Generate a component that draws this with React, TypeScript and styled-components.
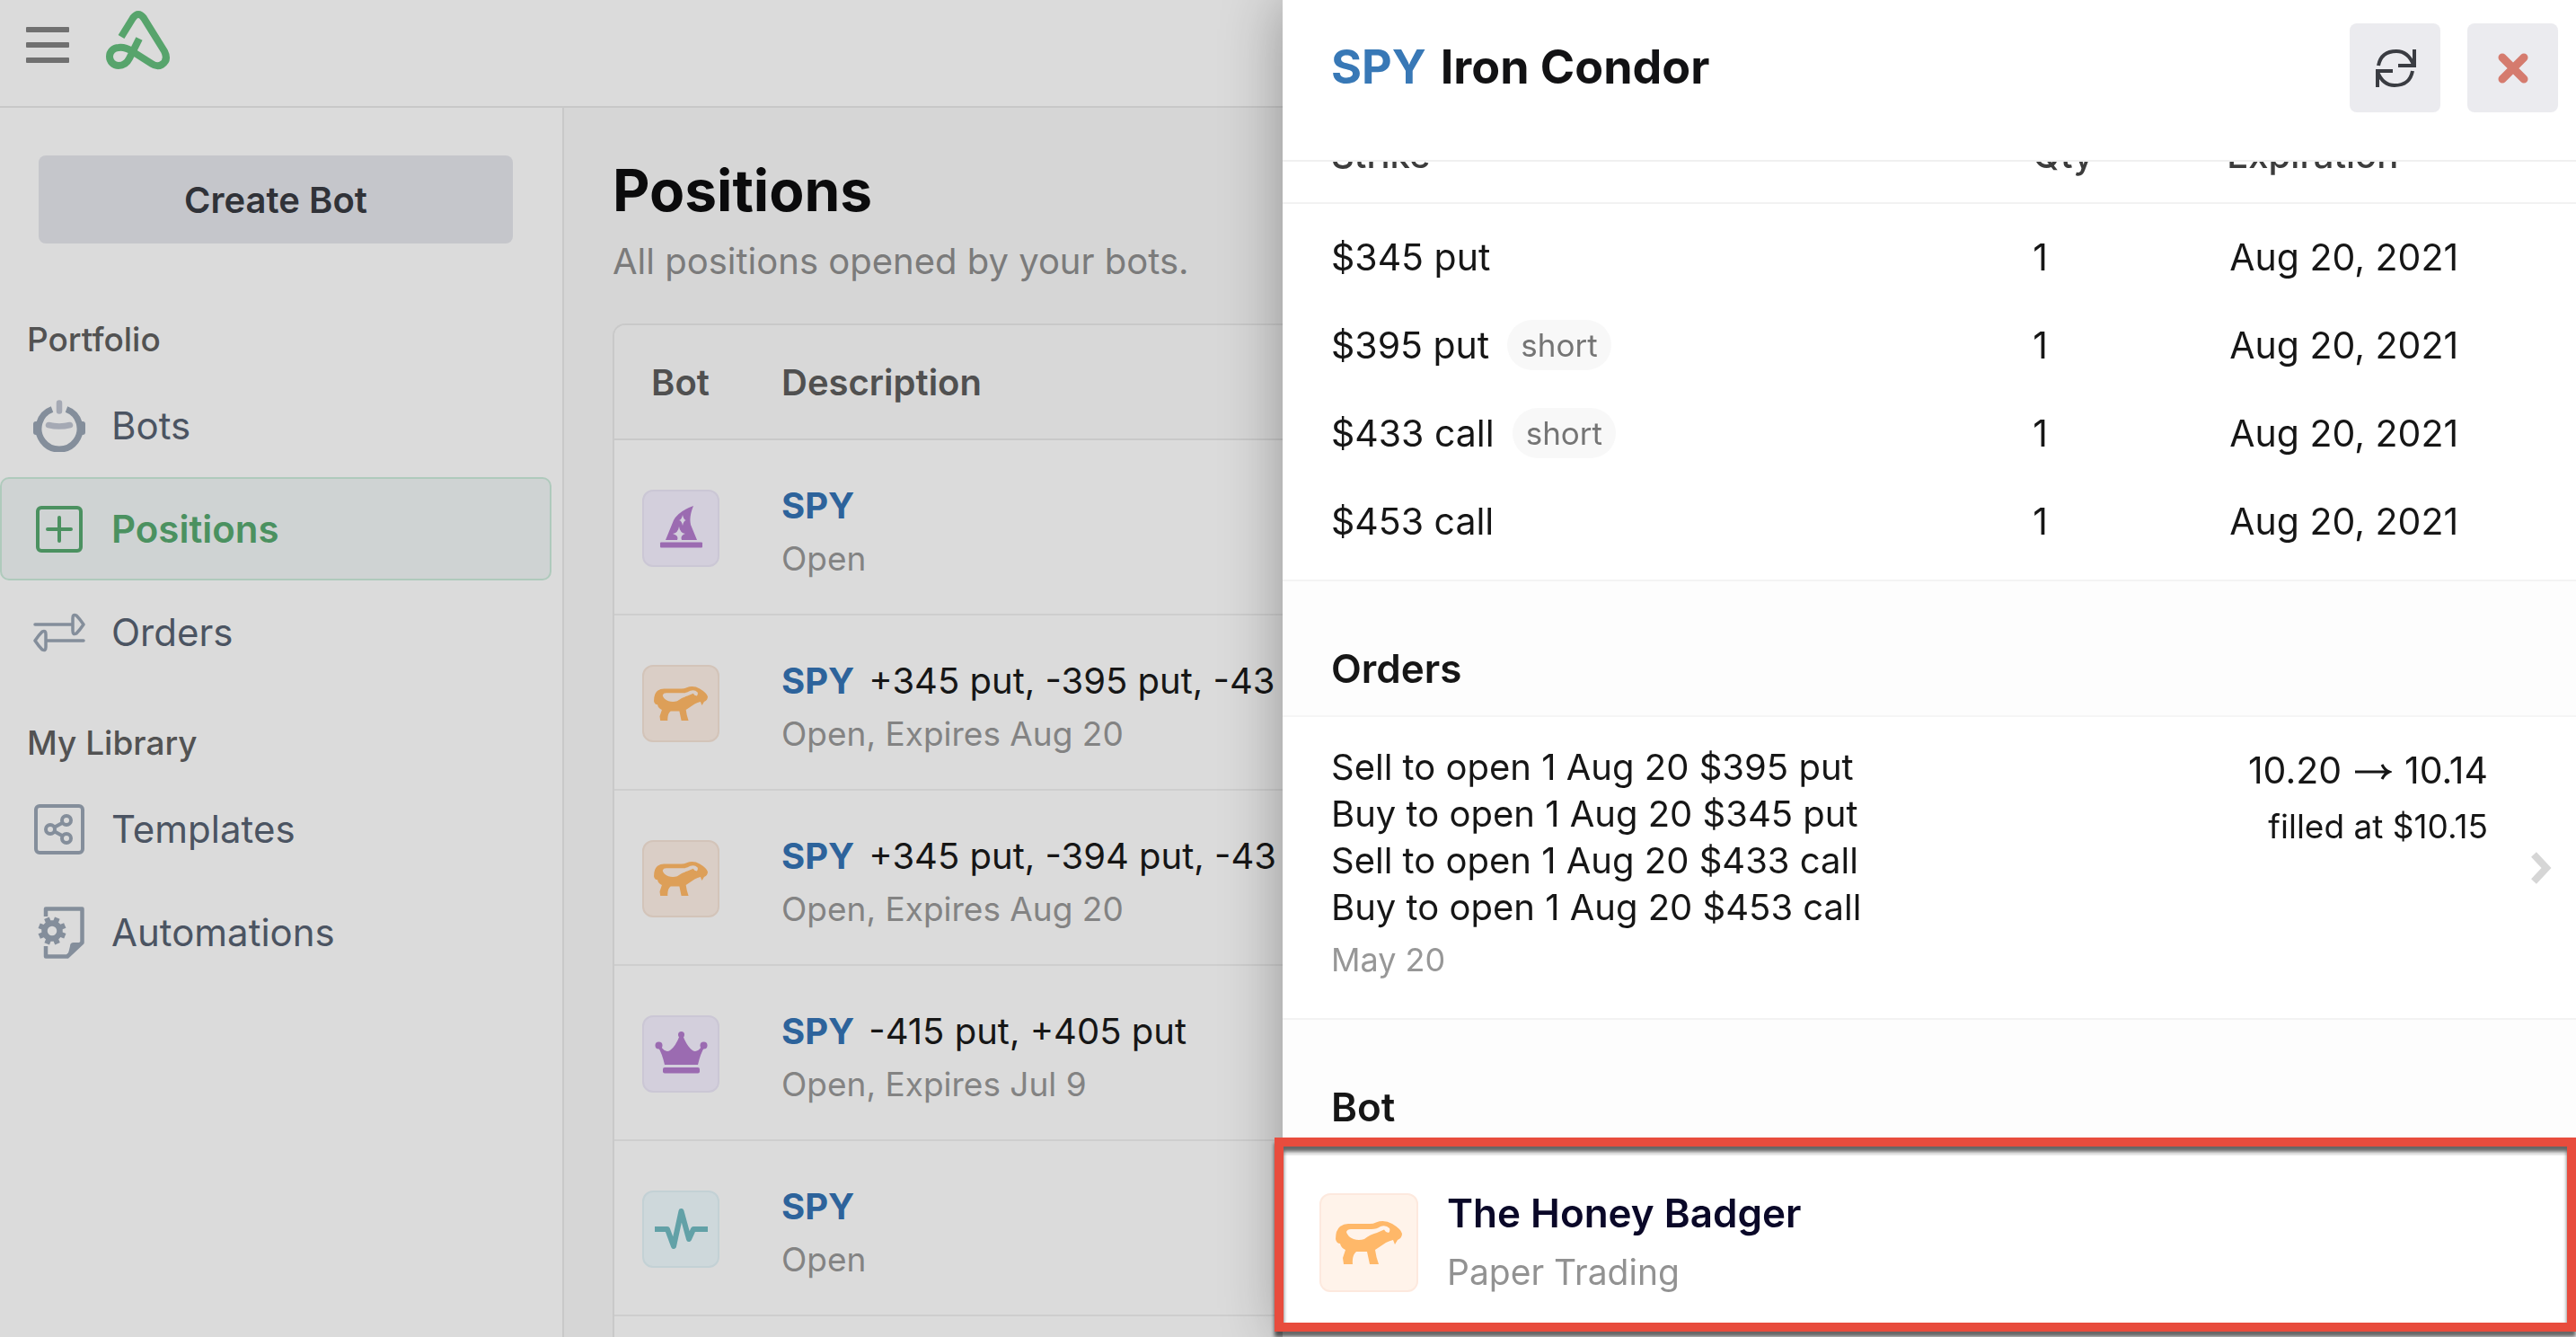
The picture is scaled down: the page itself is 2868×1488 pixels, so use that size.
import React from "react";
import styled, { createGlobalStyle } from "styled-components";

const GlobalStyle = createGlobalStyle`
  *, *::before, *::after { box-sizing: border-box; }
  body {
    margin: 0;
    background: #d6d6d6;
    color: #161616;
    font-family: Inter, "Liberation Sans", sans-serif;
    font-size: 40px;
  }
  h1, h2, h3, p { margin: 0; font-weight: inherit; }
  a { color: inherit; text-decoration: none; }
  button { font: inherit; border: 0; padding: 0; cursor: pointer; }
`;

/* ---------- page shell ---------- */

const Page = styled.div`
  display: flex;
  flex-direction: column;
  height: 100vh;
  overflow: hidden;
`;

const TopBar = styled.header`
  display: flex;
  align-items: flex-start;
  gap: 40px;
  height: 120px;
  flex: none;
  padding: 10px 29px 0;
  background: #dbdbdb;
  border-bottom: 2px solid #c8c8c8;
`;

const MenuButton = styled.button`
  display: flex;
  flex-direction: column;
  gap: 11px;
  width: 48px;
  padding: 20px 0 16px;
  background: none;
`;

const MenuBar = styled.span`
  height: 6px;
  border-radius: 1px;
  background: #707070;
`;

const Columns = styled.div`
  display: flex;
  flex: 1;
  min-height: 0;
`;

const Sidebar = styled.aside`
  width: 628px;
  flex: none;
  background: #dbdbdb;
  border-right: 2px solid #c9c9c9;
`;

const CreateButton = styled.button`
  display: block;
  width: calc(100% - 98px);
  height: 98px;
  margin: 53px 55px 41px 43px;
  border-radius: 8px;
  background: #c5c6cb;
  color: #303238;
  font-weight: 600;
`;

const NavGroup = styled.section`
  padding-top: 38px;
`;

const NavLabel = styled.h2`
  margin-bottom: 10px;
  padding-left: 30px;
  color: #525252;
  font-size: 37px;
  font-weight: 500;
  line-height: 56px;
`;

const NavItem = styled.a<{ $active?: boolean }>`
  display: flex;
  align-items: center;
  gap: 29px;
  height: 115px;
  margin-right: 12px;
  padding-left: 35px;
  border: 2px solid ${(p) => (p.$active ? "#afcabc" : "transparent")};
  border-radius: 10px;
  background: ${(p) => (p.$active ? "#cfd3d3" : "transparent")};
  color: ${(p) => (p.$active ? "#4b9160" : "#4b5462")};
  font-size: 42px;
  font-weight: ${(p) => (p.$active ? 600 : 400)};
  svg { flex: none; color: ${(p) => (p.$active ? "#4b9160" : "#848e9b")}; }
`;

const Main = styled.main`
  display: flex;
  flex-direction: column;
  flex: 1;
  min-width: 0;
  padding: 52px 56px 0 54px;
`;

const PageTitle = styled.h1`
  color: #0b0b0c;
  font-size: 64px;
  font-weight: 700;
  line-height: 80px;
`;

const PageIntro = styled.p`
  color: #7b7b7b;
  line-height: 78px;
`;

const Card = styled.div`
  flex: 1;
  margin-top: 30px;
  border: 2px solid #c9c9c9;
  border-bottom: 0;
  border-radius: 14px 14px 0 0;
  background: #dbdbdb;
  overflow: hidden;
`;

const PositionsTable = styled.table`
  width: 100%;
  border-spacing: 0;
  th {
    height: 128px;
    padding: 0;
    border-bottom: 2px solid #c9c9c9;
    background: #d8d8d8;
    color: #505050;
    font-weight: 600;
    text-align: left;
  }
  td {
    height: 195px;
    padding: 3px 0 0;
    border-bottom: 2px solid #cecece;
  }
  th:first-child, td:first-child {
    width: 147px;
    text-align: center;
  }
  th:last-child, td:last-child { padding-left: 39px; }
`;

type Tone = "purple" | "orange" | "teal" | "peach";

const tones: Record<Tone, [string, string, string]> = {
  purple: ["#d3cfdc", "#cbc7d5", "#9b6bb1"],
  orange: ["#dacec6", "#d3c4b9", "#dd9f58"],
  teal: ["#ced8db", "#c3d1d5", "#62a1a7"],
  peach: ["#fff3ea", "#fde9de", "#ffb869"],
};

const Tile = styled.span<{ $tone: Tone; $large?: boolean }>`
  display: inline-flex;
  align-items: center;
  justify-content: center;
  flex: none;
  width: ${(p) => (p.$large ? 110 : 86)}px;
  height: ${(p) => (p.$large ? 110 : 86)}px;
  vertical-align: middle;
  border: 2px solid ${(p) => tones[p.$tone][1]};
  border-radius: 12px;
  background: ${(p) => tones[p.$tone][0]};
  color: ${(p) => tones[p.$tone][2]};
`;

const Summary = styled.div`
  padding-top: 8px;
  white-space: nowrap;
`;

const Legs = styled.p`
  line-height: 60px;
`;

const Symbol = styled.a`
  margin-right: 16px;
  color: #2d639b;
  font-weight: 700;
`;

const Status = styled.p`
  color: #838383;
  font-size: 37px;
  line-height: 58px;
`;

/* ---------- drawer ---------- */

const Drawer = styled.aside`
  position: fixed;
  inset: 0 0 0 auto;
  display: flex;
  flex-direction: column;
  width: calc(50% + 6px);
  background: #fff;
  box-shadow: 0 0 64px rgba(0, 0, 0, 0.32);
`;

const DrawerHeader = styled.header`
  display: flex;
  align-items: flex-start;
  height: 180px;
  flex: none;
  gap: 30px;
  padding: 26px 20px 0 54px;
  border-bottom: 2px solid #f0f0f0;
`;

const DrawerTitle = styled.h2`
  display: flex;
  flex: 1;
  gap: 16px;
  color: #121214;
  font-size: 52px;
  font-weight: 700;
  line-height: 98px;
`;

const TitleSymbol = styled.span`
  color: #3878b6;
`;

const SquareButton = styled.button`
  display: flex;
  align-items: center;
  justify-content: center;
  width: 101px;
  height: 99px;
  border-radius: 8px;
  background: #ebebef;
  color: #3a3c42;
`;

const DrawerBody = styled.div`
  flex: 1;
  min-height: 0;
  overflow: hidden;
`;

/* The list is scrolled so that its head row sits half under the header. */
const Scrolled = styled.div`
  margin-top: -45px;
`;

const LegsTable = styled.table`
  width: 100%;
  padding-bottom: 16px;
  border-spacing: 0;
  table-layout: fixed;
  th {
    height: 92px;
    padding: 0 0 16px;
    border-bottom: 2px solid #f2f2f2;
    color: #3c3c3c;
    font-weight: 500;
    text-align: left;
  }
  td {
    height: 98px;
    padding: 0;
    font-size: 41px;
  }
  tbody::before {
    content: "";
    display: block;
    height: 10px;
  }
  th:first-child, td:first-child { width: 58%; padding-left: 54px; }
  th:nth-child(2) { width: 15%; }
  td:last-child { padding-left: 3px; }
`;

const Leg = styled.div`
  display: flex;
  align-items: center;
  gap: 20px;
`;

const Pill = styled.span`
  padding: 0 15px;
  border-radius: 28px;
  background: #f8f8f8;
  color: #757575;
  font-size: 35px;
  line-height: 56px;
`;

const SectionHead = styled.div`
  padding: 67px 54px 22px;
  border-top: 2px solid #f3f3f3;
  border-bottom: 2px solid #f5f5f5;
  background: #fdfdfd;
`;

const SectionTitle = styled.h3`
  color: #161616;
  font-size: 44px;
  font-weight: 600;
  line-height: 60px;
`;

const OrderRow = styled.a`
  display: flex;
  padding: 26px 27px 33px 54px;
`;

const OrderText = styled.div`
  flex: 1;
  padding-top: 4px;
  line-height: 52px;
`;

const OrderDate = styled.p`
  color: #979797;
  font-size: 36px;
  line-height: 64px;
`;

const Fill = styled.div`
  padding-right: 48px;
  text-align: right;
`;

const PriceMove = styled.p`
  display: flex;
  align-items: center;
  justify-content: flex-end;
  gap: 14px;
  font-size: 41px;
  line-height: 66px;
`;

const FillPrice = styled.p`
  font-size: 37px;
  line-height: 60px;
`;

const ChevronSlot = styled.span`
  display: flex;
  align-items: center;
  padding-top: 8px;
  color: #d6d6d6;
`;

const BotRow = styled.a`
  display: flex;
  align-items: center;
  gap: 32px;
  padding: 32px 41px;
`;

const BotName = styled.p`
  color: #0a0828;
  font-size: 44px;
  font-weight: 600;
  line-height: 65px;
`;

const BotMode = styled.p`
  color: #929292;
  font-size: 39px;
  line-height: 65px;
`;

const Highlight = styled.div`
  position: absolute;
  right: 0;
  bottom: 6px;
  left: -9px;
  height: 216px;
  border: 10px solid #e84c3d;
  filter: drop-shadow(0 6px 2px rgba(0, 0, 0, 0.6));
  pointer-events: none;
`;

/* ---------- drawings ---------- */

const Logo = () => (
  <svg width="74" height="68" viewBox="116 10 74 68" fill="none" stroke="#57a46c" strokeWidth="8" strokeLinejoin="round" role="img" aria-label="Home">
    <path d="M134 41 L147 20 Q153 12 159 20 L182 57 Q187 67 179 72 Q174 75 168 71 L146 57 Q138 52 131 53 A10 10 0 0 0 131 73 Q139 73 143 65 L154 43" />
  </svg>
);

const BotsIcon = () => (
  <svg width="58" height="58" viewBox="0 0 58 58" fill="none" strokeLinecap="round">
    <path d="M37 10.5 A23 23 0 1 1 21 10.5" stroke="currentColor" strokeWidth="7" strokeLinecap="butt" />
    <rect x="0" y="24" width="7" height="15" rx="3" fill="currentColor" />
    <rect x="51" y="24" width="7" height="15" rx="3" fill="currentColor" />
    <path d="M29 3.500 V12.500 M17 28 Q29 31 41 28" stroke="#a5a9b4" strokeWidth="6.500" />
  </svg>
);

const PositionsIcon = () => (
  <svg width="58" height="58" viewBox="0 0 58 58" fill="none" stroke="currentColor" strokeWidth="4" strokeLinecap="round">
    <rect x="5" y="5" width="48" height="48" rx="4" />
    <path d="M29 16 V42 M16 29 H42" />
  </svg>
);

const OrdersIcon = () => (
  <svg width="58" height="58" viewBox="0 0 58 58" fill="none" stroke="currentColor" strokeWidth="3.500" strokeLinecap="round" strokeLinejoin="round">
    <path d="M2 20 H44 M44 13 Q44 8 48 10 Q52 14 56 20 Q52 26 48 30 Q44 32 44 27 Z" />
    <path d="M56 38 H14 M14 31 Q14 26 10 28 Q6 32 2 38 Q6 44 10 48 Q14 50 14 45 Z" />
  </svg>
);

const TemplatesIcon = () => (
  <svg width="58" height="58" viewBox="0 0 58 58" fill="none" stroke="currentColor" strokeWidth="4">
    <rect x="3" y="3" width="52" height="52" rx="4" />
    <circle cx="19" cy="29" r="5" />
    <circle cx="37" cy="19" r="5" />
    <circle cx="37" cy="39" r="5" />
    <path d="M23 27 L33 21.500 M23 31 L33 36.500" />
  </svg>
);

const AutomationsIcon = () => (
  <svg width="58" height="58" viewBox="0 0 58 58" fill="none" stroke="currentColor" strokeWidth="4.500">
    <path d="M14 11 V2.500 H54.500 V40 L38 55.500 H14 V44" strokeLinejoin="round" />
    <path d="M54 40 H45 Q41 40 41 44 L38 56 Z" fill="currentColor" stroke="none" />
    <circle cx="21" cy="27" r="8.500" strokeWidth="6.500" />
    {[0, 45, 90, 135, 180, 225, 270, 315].map((a) => (
      <path key={a} d="M21 17 V11.500" strokeWidth="6" transform={`rotate(${a + 22} 21 27)`} />
    ))}
  </svg>
);

const HatIcon = () => (
  <svg width="82" height="82" viewBox="2 2 82 82" fill="currentColor" aria-hidden="true">
    <path
      fillRule="evenodd"
      d="M57 18 Q40 24 35 34 L26 56 H39 Q41 51 34 49 Q40 48 41 41 Q42 48 48 49 Q42 51 44 56 H61 L54 39 Q52 30 57 18 Z M45 28 Q46 33.500 49 34 Q46 34.500 45 40 Q44 34.500 41 34 Q44 33.500 45 28 Z"
    />
    <rect x="20" y="58.500" width="47" height="6" rx="1" />
  </svg>
);

const BadgerIcon = ({ width }: { width: number }) => (
  <svg width={width} viewBox="0 0 74 48" fill="currentColor" aria-hidden="true">
    <path
      fillRule="evenodd"
      d="M0 20 Q0 10 5 6 Q9 3 14 3 H38 Q42 3 45 1.500 Q54 -2 63 3 Q73 9 74 14 Q74 19 69 21 L66 26 L64 21 Q60 22 56 24 L44 32 Q45 40 48 48 H38 L35 34 H23 Q18 38 19 48 H9 L8 41 L11 32 Q6 30 5 25 Q1 25 0 20 Z M12 12 Q13 9 17 9 H40 Q46 9 50 6 Q56 4 60 8 Q61 11 59 13 L56 12 L54 9.500 L46 13 Q38 15 32 20 Q26 22 20 20 Q13 17 12 12 Z"
    />
  </svg>
);

const CrownIcon = () => (
  <svg width="82" height="82" viewBox="2 2 82 82" fill="currentColor" aria-hidden="true">
    <circle cx="18.500" cy="33.500" r="4" />
    <circle cx="43.500" cy="21.500" r="3.500" />
    <circle cx="68.500" cy="33.500" r="4" />
    <path d="M18 36 L21 35 Q26 42 31 39 Q37 35 42 22 H45 Q50 35 56 39 Q61 42 66 35 L69 36 Q65 42 62 55 H25 Q22 42 18 36 Z" />
    <rect x="23" y="58" width="41" height="6.500" rx="2" />
  </svg>
);

const PulseIcon = () => (
  <svg width="82" height="82" viewBox="2 2 82 82" fill="none" stroke="currentColor" strokeWidth="6" strokeLinejoin="round" aria-hidden="true">
    <path d="M14 43 H28 L35 62 L43.500 23 L52 54 L57 43 H73" />
  </svg>
);

const RefreshIcon = () => (
  <svg width="48" height="46" viewBox="0 0 48 46" fill="none" stroke="currentColor" strokeWidth="4">
    <path d="M5 20 Q8 4 25 4 Q38 4 44 19 M45 2 V20 H27" />
    <path d="M43 26 Q40 42 23 42 Q10 42 4 27 M4 44 V26 H21" />
  </svg>
);

const CloseIcon = () => (
  <svg width="36" height="38" viewBox="0 0 36 38" fill="none" stroke="#d57b6e" strokeWidth="9" strokeLinecap="round">
    <path d="M6 7 L30 31 M30 7 L6 31" />
  </svg>
);

const ArrowIcon = () => (
  <svg width="42" height="22" viewBox="0 0 42 22" fill="none" stroke="currentColor" strokeWidth="3" role="img" aria-label="to">
    <path d="M1 13 H39 M31 5 Q34 11 39 13 Q34 15 31 21" />
  </svg>
);

const ChevronIcon = () => (
  <svg width="23" height="36" viewBox="0 0 23 36" fill="none" stroke="currentColor" strokeWidth="8" aria-hidden="true">
    <path d="M3 3 L17 18 L3 33" />
  </svg>
);

/* ---------- data ---------- */

const portfolio = [
  { name: "Bots", icon: <BotsIcon /> },
  { name: "Positions", icon: <PositionsIcon />, active: true },
  { name: "Orders", icon: <OrdersIcon /> },
];

const library = [
  { name: "Templates", icon: <TemplatesIcon /> },
  { name: "Automations", icon: <AutomationsIcon /> },
];

const positions: { tone: Tone; icon: React.ReactNode; legs: string; status: string }[] = [
  { tone: "purple", icon: <HatIcon />, legs: "", status: "Open" },
  { tone: "orange", icon: <BadgerIcon width={60} />, legs: "+345 put, -395 put, -43", status: "Open, Expires Aug 20" },
  { tone: "orange", icon: <BadgerIcon width={60} />, legs: "+345 put, -394 put, -43", status: "Open, Expires Aug 20" },
  { tone: "purple", icon: <CrownIcon />, legs: "-415 put, +405 put", status: "Open, Expires Jul 9" },
  { tone: "teal", icon: <PulseIcon />, legs: "", status: "Open" },
];

const legs = [
  { strike: "$345 put", short: false },
  { strike: "$395 put", short: true },
  { strike: "$433 call", short: true },
  { strike: "$453 call", short: false },
];

const orderLines = [
  "Sell to open 1 Aug 20 $395 put",
  "Buy to open 1 Aug 20 $345 put",
  "Sell to open 1 Aug 20 $433 call",
  "Buy to open 1 Aug 20 $453 call",
];

/* ---------- app ---------- */

type NavEntry = { name: string; icon: React.ReactNode; active?: boolean };

const Nav = ({ label, items }: { label: string; items: NavEntry[] }) => (
  <NavGroup>
    <NavLabel>{label}</NavLabel>
    {items.map((item) => (
      <NavItem key={item.name} href="#" $active={item.active} aria-current={item.active ? "page" : undefined}>
        {item.icon}
        {item.name}
      </NavItem>
    ))}
  </NavGroup>
);

export default function App() {
  return (
    <>
      <GlobalStyle />
      <Page>
        <TopBar>
          <MenuButton aria-label="Menu">
            <MenuBar />
            <MenuBar />
            <MenuBar />
          </MenuButton>
          <Logo />
        </TopBar>
        <Columns>
          <Sidebar>
            <CreateButton>Create Bot</CreateButton>
            <nav>
              <Nav label="Portfolio" items={portfolio} />
              <Nav label="My Library" items={library} />
            </nav>
          </Sidebar>
          <Main>
            <PageTitle>Positions</PageTitle>
            <PageIntro>All positions opened by your bots.</PageIntro>
            <Card>
              <PositionsTable>
                <thead>
                  <tr>
                    <th>Bot</th>
                    <th>Description</th>
                  </tr>
                </thead>
                <tbody>
                  {positions.map((p, i) => (
                    <tr key={i}>
                      <td>
                        <Tile $tone={p.tone}>{p.icon}</Tile>
                      </td>
                      <td>
                        <Summary>
                          <Legs>
                            <Symbol href="#">SPY</Symbol>
                            {p.legs}
                          </Legs>
                          <Status>{p.status}</Status>
                        </Summary>
                      </td>
                    </tr>
                  ))}
                </tbody>
              </PositionsTable>
            </Card>
          </Main>
        </Columns>
      </Page>

      <Drawer>
        <DrawerHeader>
          <DrawerTitle>
            <TitleSymbol>SPY</TitleSymbol>
            Iron Condor
          </DrawerTitle>
          <SquareButton aria-label="Refresh">
            <RefreshIcon />
          </SquareButton>
          <SquareButton aria-label="Close">
            <CloseIcon />
          </SquareButton>
        </DrawerHeader>
        <DrawerBody>
          <Scrolled>
            <LegsTable>
              <thead>
                <tr>
                  <th>Strike</th>
                  <th>Qty</th>
                  <th>Expiration</th>
                </tr>
              </thead>
              <tbody>
                {legs.map((leg) => (
                  <tr key={leg.strike}>
                    <td>
                      <Leg>
                        {leg.strike}
                        {leg.short && <Pill>short</Pill>}
                      </Leg>
                    </td>
                    <td>1</td>
                    <td>Aug 20, 2021</td>
                  </tr>
                ))}
              </tbody>
            </LegsTable>
            <SectionHead>
              <SectionTitle>Orders</SectionTitle>
            </SectionHead>
            <OrderRow href="#">
              <OrderText>
                {orderLines.map((line) => (
                  <p key={line}>{line}</p>
                ))}
                <OrderDate>May 20</OrderDate>
              </OrderText>
              <Fill>
                <PriceMove>
                  10.20
                  <ArrowIcon />
                  10.14
                </PriceMove>
                <FillPrice>filled at $10.15</FillPrice>
              </Fill>
              <ChevronSlot>
                <ChevronIcon />
              </ChevronSlot>
            </OrderRow>
            <SectionHead>
              <SectionTitle>Bot</SectionTitle>
            </SectionHead>
            <BotRow href="#">
              <Tile $tone="peach" $large>
                <BadgerIcon width={74} />
              </Tile>
              <div>
                <BotName>The Honey Badger</BotName>
                <BotMode>Paper Trading</BotMode>
              </div>
            </BotRow>
          </Scrolled>
        </DrawerBody>
        <Highlight />
      </Drawer>
    </>
  );
}
